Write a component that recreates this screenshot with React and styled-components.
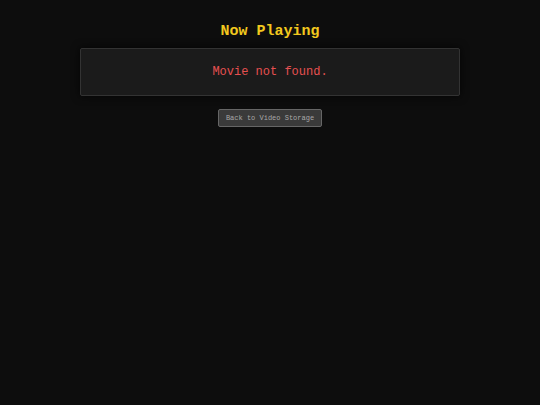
import React from 'react'
import styled, { createGlobalStyle } from 'styled-components'

const mono = `"Courier New", Courier, "Nimbus Mono PS", "Nimbus Mono L", FreeMono, "Liberation Mono", monospace`

const GlobalStyle = createGlobalStyle`
html, body {
  margin: 0;
  background: #0d0d0d;
}
body {
  font-family: ${mono};
  min-height: 405px;
}
`

const Page = styled.div`
display: flex;
flex-direction: column;
align-items: center;
padding-top: 22px;
`

const Title = styled.h1`
margin: 0;
font-size: 15px;
line-height: 20px;
font-weight: bold;
color: #f2c81e;
`

const Card = styled.div`
box-sizing: border-box;
margin-top: 6px;
width: 380px;
height: 48px;
display: flex;
justify-content: center;
align-items: center;
background: #1b1b1b;
border: 1px solid #333;
border-radius: 2px;
box-shadow: 0 0 8px rgba(0, 0, 0, 0.8);
`

const Message = styled.p`
margin: 0;
font-size: 12px;
color: #e65050;
`

const BackButton = styled.button`
box-sizing: border-box;
margin-top: 13px;
width: 104px;
height: 18px;
padding: 0;
font-family: ${mono};
font-size: 7px;
color: #a8a8a8;
background: #3a3a3a;
border: 1px solid #666;
border-radius: 2px;
cursor: pointer;
`

function App() {
  return (
    <>
      <GlobalStyle />
      <Page>
        <Title>Now Playing</Title>
        <Card>
          <Message>Movie not found.</Message>
        </Card>
        <BackButton>Back to Video Storage</BackButton>
      </Page>
    </>
  )
}

export default App
